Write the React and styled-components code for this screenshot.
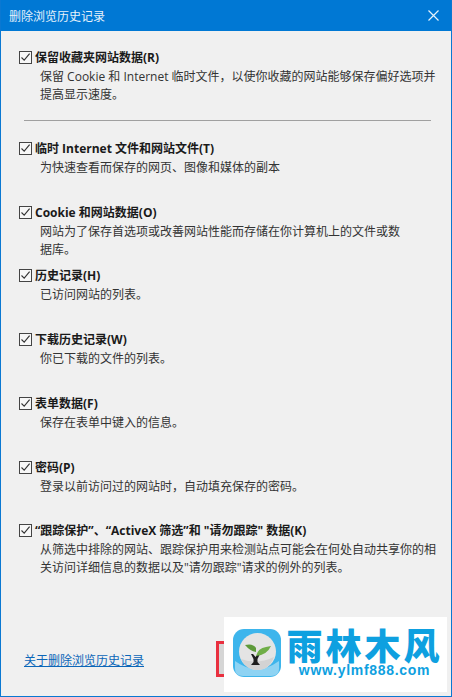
import styled, { createGlobalStyle } from "styled-components";

const GlobalStyle = createGlobalStyle`
    html, body {
        margin: 0;
        padding: 0;
        background: #f0f0f0;
    }
`;

const Dialog = styled.div`
    position: relative;
    box-sizing: border-box;
    width: 452px;
    height: 697px;
    overflow: hidden;
    display: flex;
    flex-direction: column;
    background: #f0f0f0;
    border: 1px solid #0a78d2;
    border-top: none;
    font-family: "Open Sans", "Noto Sans CJK SC", sans-serif;
    font-size: 12px;
    color: #222;
`;

const TitleBar = styled.header`
    flex: none;
    height: 31px;
    margin: 0 -1px;
    padding: 0 13px 0 9px;
    display: flex;
    align-items: center;
    justify-content: space-between;
    background: #0078d4;
    color: #e6f2fb;
`;

const Title = styled.h1`
    margin: 0;
    font-size: 12px;
    font-weight: 400;
`;

const CloseButton = styled.button`
    display: flex;
    padding: 0;
    border: none;
    background: none;
`;

const Content = styled.main`
    flex: 1;
    padding: 17px 9px 0 18px;
    display: flex;
    flex-direction: column;
`;

const Option = styled.section`
    margin-top: ${(props) => props.$gap || 0}px;
`;

const OptionLabel = styled.label`
    height: 18px;
    display: flex;
    align-items: center;
    gap: 3px;
    font-weight: 700;
    line-height: 18px;
    color: #1a1a1a;
    white-space: nowrap;
`;

const LabelText = styled.span`
    padding-top: 2px;
`;

const CheckBox = styled.span`
    flex: none;
    box-sizing: border-box;
    width: 13px;
    height: 13px;
    display: flex;
    border: 1px solid #444;
    background: #f7f7f7;
`;

const Description = styled.p`
    margin: 0 0 -1px 21px;
    padding-top: 2px;
    max-width: ${(props) => props.$width || 404}px;
    line-height: 18px;
    color: #333;
`;

const Divider = styled.hr`
    box-sizing: border-box;
    width: 407px;
    height: 1px;
    margin: 17px 0 18px 5px;
    border: none;
    background: #a0a0a0;
`;

const Footer = styled.footer`
    margin-top: 76px;
    padding-left: 5px;
`;

const HelpLink = styled.a`
    color: #0b66b8;
    line-height: 18px;
    text-decoration: underline;
`;

const ApplyButton = styled.div`
    position: absolute;
    left: 215px;
    top: 641px;
    box-sizing: border-box;
    width: 60px;
    height: 36px;
    border: 3px solid #e9303f;
    background: #d6d6d6;
`;

const Watermark = styled.aside`
    position: absolute;
    left: 223px;
    top: 617px;
    width: 223px;
    height: 75px;
    display: flex;
    align-items: flex-start;
    gap: 6px;
    padding: 12px 0 0 9px;
    box-sizing: border-box;
    background: #fff;
`;

const BrandText = styled.div`
    display: flex;
    flex-direction: column;
    align-items: center;
    width: 155px;
    margin-top: -4px;
`;

const BrandName = styled.div`
    font-family: "Noto Sans CJK SC", sans-serif;
    height: 38px;
    font-size: 36px;
    font-weight: 900;
    line-height: 38px;
    letter-spacing: 3px;
    color: #0ea0e0;
    white-space: nowrap;
`;

const BrandUrl = styled.div`
    font-family: "Liberation Sans", Arial, sans-serif;
    font-size: 14px;
    font-weight: 700;
    line-height: 15px;
    letter-spacing: 0.7px;
    color: #0ea0e0;
    white-space: nowrap;
`;

const Check = () => (
    <svg width="11" height="11" viewBox="0 0 11 11" fill="none">
        <path d="M1.5 5.5 L4.2 8.2 L9.6 1.6" stroke="#333" strokeWidth="1.1" />
    </svg>
);

const Logo = () => (
    <svg width="48" height="48" viewBox="0 0 48 48">
        <rect width="48" height="48" rx="11" fill="#3db5ec" />
        <path d="M2 32 Q24 48 46 32 L46 40 Q46 47 38 47 L10 47 Q2 47 2 40Z" fill="#8ed3f3" />
        <circle cx="24.5" cy="22.5" r="18.5" fill="#e4e4e4" />
        <path d="M8 30 Q24 36 41 28 Q36 41 24.5 41 Q13 41 8 30Z" fill="#d3d3d3" />
        <path d="M18 25 L20 25 L22.5 28 L25 25 L27 25 L24.5 30 L24.5 33 L27 36 L18 36 L20.5 33 L20.5 30Z" fill="#1e1e1e" />
        <path d="M23 23 Q17 22 12 16 Q20 14 23 19Z" fill="#5d9a3a" />
        <path d="M23 27 Q25 19 33 18 L38 17 Q34 26 23 27Z" fill="#6fae47" />
    </svg>
);

const options = [
    { label: "保留收藏夹网站数据(R)", text: "保留 Cookie 和 Internet 临时文件，以使你收藏的网站能够保存偏好选项并提高显示速度。" },
    { label: "临时 Internet 文件和网站文件(T)", text: "为快速查看而保存的网页、图像和媒体的副本" },
    { label: "Cookie 和网站数据(O)", text: "网站为了保存首选项或改善网站性能而存储在你计算机上的文件或数据库。", gap: 27, width: 362 },
    { label: "历史记录(H)", text: "已访问网站的列表。", gap: 8 },
    { label: "下载历史记录(W)", text: "你已下载的文件的列表。", gap: 27 },
    { label: "表单数据(F)", text: "保存在表单中键入的信息。", gap: 27 },
    { label: "密码(P)", text: "登录以前访问过的网站时，自动填充保存的密码。", gap: 27 },
    { label: "“跟踪保护”、“ActiveX 筛选”和 \"请勿跟踪\" 数据(K)", text: "从筛选中排除的网站、跟踪保护用来检测站点可能会在何处自动共享你的相关访问详细信息的数据以及\"请勿跟踪\"请求的例外的列表。", gap: 26 },
];

const OptionBlock = ({ option }) => (
    <Option $gap={option.gap}>
        <OptionLabel>
            <CheckBox>
                <Check />
            </CheckBox>
            <LabelText>{option.label}</LabelText>
        </OptionLabel>
        <Description $width={option.width}>{option.text}</Description>
    </Option>
);

const App = () => {
    return (
        <Dialog>
            <GlobalStyle />
            <TitleBar>
                <Title>删除浏览历史记录</Title>
                <CloseButton aria-label="关闭">
                    <svg width="11" height="11" viewBox="0 0 11 11">
                        <path d="M0.5 0.5 L10.5 10.5 M10.5 0.5 L0.5 10.5" stroke="#e6f2fb" strokeWidth="1.2" />
                    </svg>
                </CloseButton>
            </TitleBar>
            <Content>
                <OptionBlock option={options[0]} />
                <Divider />
                {options.slice(1).map((option) => (
                    <OptionBlock key={option.label} option={option} />
                ))}
                <Footer>
                    <HelpLink href="#">关于删除浏览历史记录</HelpLink>
                </Footer>
            </Content>
            <ApplyButton />
            <Watermark>
                <Logo />
                <BrandText>
                    <BrandName>雨林木风</BrandName>
                    <BrandUrl>www.ylmf888.com</BrandUrl>
                </BrandText>
            </Watermark>
        </Dialog>
    );
};

export default App;
